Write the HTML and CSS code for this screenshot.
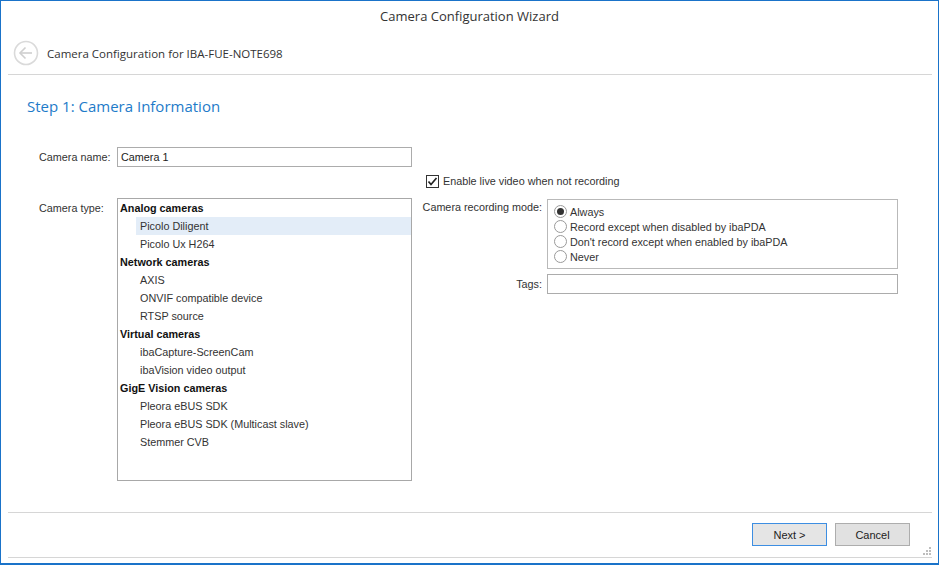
FILE: index.html
```html
<!DOCTYPE html>
<html>
<head>
<meta charset="utf-8">
<link rel="stylesheet" href="styles.css">
</head>
<body>
<div class="window">
  <div class="titlebar">Camera Configuration Wizard</div>
  <div class="header">
    <svg class="back" width="26" height="26" viewBox="0 0 26 26">
      <circle cx="13" cy="13" r="11.5" fill="none" stroke="#dadada" stroke-width="1.6"/>
      <line x1="7" y1="13" x2="19" y2="13" stroke="#cfcfcf" stroke-width="1.6"/>
      <polyline points="12.5,7.5 7,13 12.5,18.5" fill="none" stroke="#cfcfcf" stroke-width="1.6"/>
    </svg>
    <span class="subtitle">Camera Configuration for IBA-FUE-NOTE698</span>
  </div>
  <div class="content">
    <h2 class="step">Step 1: Camera Information</h2>
    <div class="form">
      <label class="lbl name-lbl">Camera name:</label>
      <div class="textbox name-box">Camera 1</div>

      <div class="check-row">
        <span class="checkbox">
          <svg width="11" height="11" viewBox="0 0 11 11"><polyline points="1.5,5.5 4,8.5 9.5,2" fill="none" stroke="#222" stroke-width="1.7"/></svg>
        </span>
        <span>Enable live video when not recording</span>
      </div>

      <label class="lbl type-lbl">Camera type:</label>
      <div class="listbox">
        <div class="grp">Analog cameras</div>
        <div class="item selected">Picolo Diligent</div>
        <div class="item">Picolo Ux H264</div>
        <div class="grp">Network cameras</div>
        <div class="item">AXIS</div>
        <div class="item">ONVIF compatible device</div>
        <div class="item">RTSP source</div>
        <div class="grp">Virtual cameras</div>
        <div class="item">ibaCapture-ScreenCam</div>
        <div class="item">ibaVision video output</div>
        <div class="grp">GigE Vision cameras</div>
        <div class="item">Pleora eBUS SDK</div>
        <div class="item">Pleora eBUS SDK (Multicast slave)</div>
        <div class="item">Stemmer CVB</div>
      </div>

      <label class="lbl rlbl mode-lbl">Camera recording mode:</label>
      <div class="radiogroup">
        <div class="radio-row"><span class="radio checked"></span><span>Always</span></div>
        <div class="radio-row"><span class="radio"></span><span>Record except when disabled by ibaPDA</span></div>
        <div class="radio-row"><span class="radio"></span><span>Don't record except when enabled by ibaPDA</span></div>
        <div class="radio-row"><span class="radio"></span><span>Never</span></div>
      </div>

      <label class="lbl rlbl tags-lbl">Tags:</label>
      <div class="textbox tags-box"></div>
    </div>
  </div>
  <div class="footer">
    <button class="btn focused">Next &gt;</button>
    <button class="btn">Cancel</button>
    <svg class="grip" width="8" height="8" viewBox="0 0 8 8">
      <rect x="6" y="0" width="2" height="2" fill="#bdbdbd"/>
      <rect x="3" y="3" width="2" height="2" fill="#bdbdbd"/>
      <rect x="6" y="3" width="2" height="2" fill="#bdbdbd"/>
      <rect x="0" y="6" width="2" height="2" fill="#bdbdbd"/>
      <rect x="3" y="6" width="2" height="2" fill="#bdbdbd"/>
      <rect x="6" y="6" width="2" height="2" fill="#bdbdbd"/>
    </svg>
  </div>
</div>
</body>
</html>
```

FILE: styles.css
```css
html, body {
  margin: 0;
  padding: 0;
  background: #ffffff;
}

.window {
  width: 939px;
  height: 565px;
  box-sizing: border-box;
  border: 1px solid #1a73c9;
  border-bottom-width: 2px;
  background: #ffffff;
  display: flex;
  flex-direction: column;
  font-family: "Liberation Sans", Arial, sans-serif;
  font-size: 10.8px;
  color: #333333;
}

.titlebar {
  height: 30px;
  line-height: 30px;
  text-align: center;
  font-family: "Open Sans", "Noto Sans", sans-serif;
  font-size: 13px;
  color: #333333;
}

.header {
  margin: 0 6px 0 7px;
  height: 44px;
  border-bottom: 1px solid #d6d6d6;
  display: flex;
  align-items: center;
  padding-left: 5px;
  box-sizing: border-box;
}

.back {
  display: block;
  flex: none;
}

.subtitle {
  margin-left: 8px;
  font-family: "Open Sans", "Noto Sans", sans-serif;
  font-size: 11.5px;
  color: #333333;
  padding-top: 1px;
}

.content {
  flex: 1;
  padding-left: 26px;
}

.step {
  margin: 20px 0 0 0;
  font-family: "Open Sans", "Noto Sans", sans-serif;
  font-weight: normal;
  font-size: 15px;
  line-height: 22px;
  color: #1e7bc9;
}

.form {
  margin-top: 30px;
  margin-left: 12px;
  display: grid;
  grid-template-columns: 78px 295px 130px 5px 351px;
  grid-template-rows: 20px 32px 75px auto;
}

.lbl {
  display: flex;
  align-items: center;
  color: #333333;
}

.name-lbl {
  grid-column: 1;
  grid-row: 1;
}

.textbox {
  box-sizing: border-box;
  height: 20px;
  border: 1px solid #acacac;
  padding: 0 3px;
  display: flex;
  align-items: center;
  color: #222222;
  background: #ffffff;
}

.name-box {
  grid-column: 2;
  grid-row: 1;
}

.check-row {
  grid-column: 3 / 6;
  grid-row: 2;
  display: flex;
  align-items: center;
  padding-left: 14px;
  padding-bottom: 4px;
  color: #333333;
}

.checkbox {
  width: 13px;
  height: 13px;
  box-sizing: border-box;
  border: 1px solid #333333;
  display: flex;
  align-items: center;
  justify-content: center;
  margin-right: 4px;
  background: #ffffff;
}

.checkbox svg {
  display: block;
}

.type-lbl {
  grid-column: 1;
  grid-row: 3;
  align-items: flex-start;
  padding-top: 3px;
}

.listbox {
  grid-column: 2;
  grid-row: 3 / 5;
  height: 283px;
  box-sizing: border-box;
  border: 1px solid #a8a8a8;
  margin-top: -1px;
}

.grp {
  height: 18px;
  line-height: 18px;
  padding-left: 2px;
  font-weight: bold;
  color: #111111;
}

.item {
  height: 18px;
  line-height: 18px;
  margin-left: 18px;
  padding-left: 4px;
  color: #333333;
}

.item.selected {
  background: #e3edf8;
}

.rlbl {
  justify-content: flex-end;
}

.mode-lbl {
  grid-column: 3;
  grid-row: 3;
  align-items: flex-start;
  padding-top: 2px;
}

.radiogroup {
  grid-column: 5;
  grid-row: 3;
  height: 70px;
  box-sizing: border-box;
  border: 1px solid #b9b9b9;
  padding: 4px 0 0 6px;
}

.radio-row {
  height: 15px;
  display: flex;
  align-items: center;
  color: #333333;
}

.radio {
  width: 13px;
  height: 13px;
  box-sizing: border-box;
  border: 1px solid #9a9a9a;
  border-radius: 50%;
  margin-right: 3px;
  background: #ffffff;
  display: flex;
  align-items: center;
  justify-content: center;
}

.radio.checked::after {
  content: "";
  width: 7px;
  height: 7px;
  border-radius: 50%;
  background: #333333;
}

.tags-lbl {
  grid-column: 3;
  grid-row: 4;
  align-self: start;
  height: 20px;
}

.tags-box {
  grid-column: 5;
  grid-row: 4;
  align-self: start;
}

.footer {
  position: relative;
  margin: 0 6px 5px 7px;
  height: 46px;
  box-sizing: border-box;
  border-top: 1px solid #d6d6d6;
  border-bottom: 1px solid #d6d6d6;
  display: flex;
  justify-content: flex-end;
  align-items: flex-start;
  gap: 8px;
  padding: 10px 22px 0 0;
}

.btn {
  width: 75px;
  height: 23px;
  box-sizing: border-box;
  border: 1px solid #adadad;
  background: #e1e1e1;
  font-family: "Liberation Sans", Arial, sans-serif;
  font-size: 11px;
  color: #222222;
  padding: 0;
}

.btn.focused {
  border-color: #3d8ee2;
  background: #e5e5e5;
}

.grip {
  position: absolute;
  right: 1px;
  bottom: 2px;
  display: block;
}
```
